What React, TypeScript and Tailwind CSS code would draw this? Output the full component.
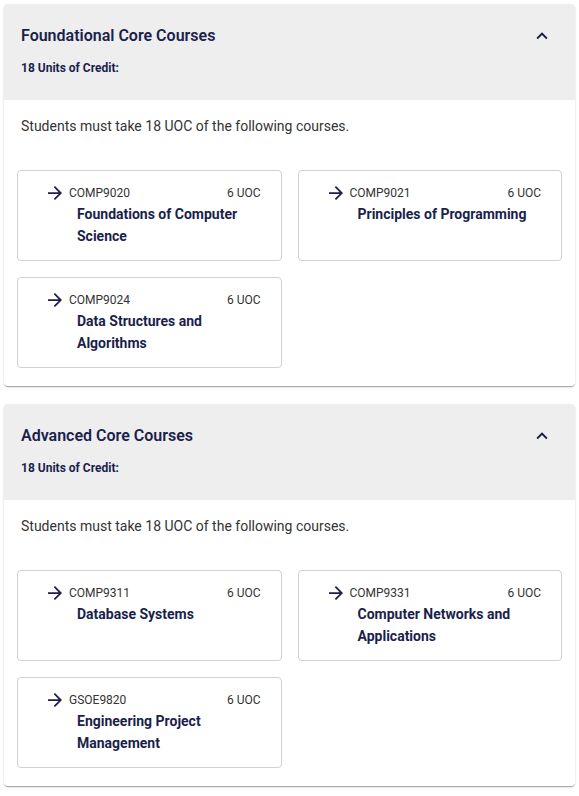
import React from 'react';

type Course = { code: string; title: string; uoc: number };

type Group = { name: string; uoc: number; courses: Course[] };

const groups: Group[] = [
  {
    name: 'Foundational Core Courses',
    uoc: 18,
    courses: [
      { code: 'COMP9020', title: 'Foundations of Computer Science', uoc: 6 },
      { code: 'COMP9021', title: 'Principles of Programming', uoc: 6 },
      { code: 'COMP9024', title: 'Data Structures and Algorithms', uoc: 6 },
    ],
  },
  {
    name: 'Advanced Core Courses',
    uoc: 18,
    courses: [
      { code: 'COMP9311', title: 'Database Systems', uoc: 6 },
      { code: 'COMP9331', title: 'Computer Networks and Applications', uoc: 6 },
      { code: 'GSOE9820', title: 'Engineering Project Management', uoc: 6 },
    ],
  },
];

function ArrowIcon() {
  return (
    <svg width="14" height="14" viewBox="4 4 16 16" className="shrink-0 text-[#1a1f4c]">
      <path fill="currentColor" d="M12 4l-1.41 1.41L16.17 11H4v2h12.17l-5.58 5.59L12 20l8-8z" />
    </svg>
  );
}

function ChevronUp() {
  return (
    <svg width="22" height="22" viewBox="0 0 24 24" className="text-[#1a1f4c]">
      <path fill="currentColor" d="M7.41 15.41L12 10.83l4.59 4.58L18 14l-6-6-6 6z" />
    </svg>
  );
}

function CourseCard({ c }: { c: Course }) {
  return (
    <div className="rounded border border-[#d0d0d0] bg-white pl-[30px] pr-[20px] pt-[14px] pb-[13px]">
      <div className="flex h-[16px] items-center text-[12px] leading-[16px] text-[#333]">
        <ArrowIcon />
        <span className="ml-[7px]">{c.code}</span>
        <span className="ml-auto">{c.uoc} UOC</span>
      </div>
      <div className="mt-[2px] pl-[29px] pr-[10px] text-[14px] font-bold leading-[22px] text-[#1a1f4c]">
        {c.title}
      </div>
    </div>
  );
}

function GroupCard({ g }: { g: Group }) {
  return (
    <div className="mx-1 overflow-hidden rounded bg-white shadow-[0_2px_1px_-1px_rgba(0,0,0,0.2),0_1px_1px_0_rgba(0,0,0,0.14),0_1px_3px_0_rgba(0,0,0,0.12)]">
      <div className="flex h-[96px] items-start justify-between bg-[#eeeeee] px-[17px] pt-[20px]">
        <div>
          <div className="text-[16px] font-semibold leading-[24px] text-[#1a1f4c]">{g.name}</div>
          <div className="mt-[11px] text-[12px] font-bold leading-[18px] text-[#1a1f4c]">
            {g.uoc} Units of Credit:
          </div>
        </div>
        <div className="mr-[5px] mt-[1px]">
          <ChevronUp />
        </div>
      </div>
      <div className="px-[13px] pb-[18px] pt-[16px]">
        <div className="px-[4px] text-[14px] leading-[20px] text-[#333]">
          Students must take {g.uoc} UOC of the following courses.
        </div>
        <div className="mt-[34px] grid grid-cols-2 gap-[16px]">
          {g.courses.map((c) => (
            <CourseCard key={c.code} c={c} />
          ))}
        </div>
      </div>
    </div>
  );
}

export default function App() {
  return (
    <div className="min-h-screen bg-white pt-1 font-['Roboto','Liberation_Sans',sans-serif]">
      <div className="flex flex-col gap-[18px]">
        {groups.map((g) => (
          <GroupCard key={g.name} g={g} />
        ))}
      </div>
    </div>
  );
}
